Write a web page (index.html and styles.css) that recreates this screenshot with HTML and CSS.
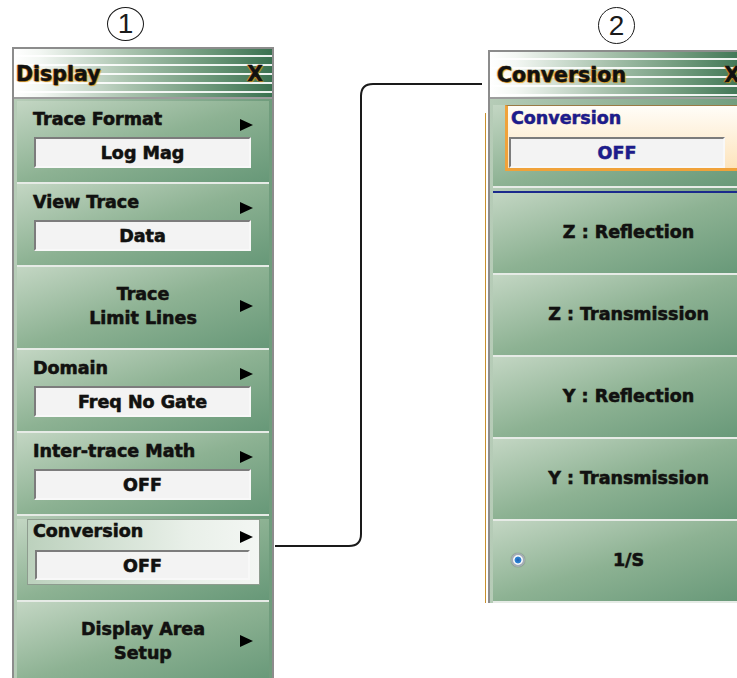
FILE: index.html
```html
<!DOCTYPE html>
<html lang="en">

<head>
    <meta charset="UTF-8">
    <meta name="viewport" content="width=device-width, initial-scale=1.0">
    <title>Display and Conversion menus</title>
    <link rel="stylesheet" href="styles.css">
</head>

<body>
    <div class="stage">
        <div class="col col-left">
            <div class="callout">1</div>
            <div class="panel panel-display">
                <div class="panel-head">
                    <span class="head-title">Display</span>
                    <span class="head-close">X</span>
                </div>
                <div class="panel-body">
                    <div class="btn">
                        <div class="btn-head"><span class="btn-label">Trace Format</span><span class="btn-arrow"></span></div>
                        <div class="btn-value">Log Mag</div>
                    </div>
                    <div class="btn">
                        <div class="btn-head"><span class="btn-label">View Trace</span><span class="btn-arrow"></span></div>
                        <div class="btn-value">Data</div>
                    </div>
                    <div class="btn btn-center">
                        <span class="btn-text">Trace<br>Limit Lines</span>
                        <span class="btn-arrow"></span>
                    </div>
                    <div class="btn">
                        <div class="btn-head"><span class="btn-label">Domain</span><span class="btn-arrow"></span></div>
                        <div class="btn-value">Freq No Gate</div>
                    </div>
                    <div class="btn">
                        <div class="btn-head"><span class="btn-label">Inter-trace Math</span><span class="btn-arrow"></span></div>
                        <div class="btn-value">OFF</div>
                    </div>
                    <div class="btn">
                        <div class="btn-hl">
                            <div class="btn-head"><span class="btn-label">Conversion</span><span class="btn-arrow"></span></div>
                            <div class="btn-value">OFF</div>
                        </div>
                    </div>
                    <div class="btn btn-center">
                        <span class="btn-text">Display Area<br>Setup</span>
                        <span class="btn-arrow"></span>
                    </div>
                </div>
            </div>
        </div>

        <div class="col col-right">
            <div class="callout">2</div>
            <div class="panel panel-conv">
                <div class="panel-head">
                    <span class="head-title">Conversion</span>
                    <span class="head-close">X</span>
                </div>
                <div class="panel-body">
                    <div class="btn">
                        <div class="btn-sel">
                            <div class="btn-head"><span class="btn-label">Conversion</span></div>
                            <div class="btn-value">OFF</div>
                        </div>
                    </div>
                    <div class="rule-blue"></div>
                    <div class="btn btn-opt"><span></span><span class="btn-text">Z : Reflection</span><span></span></div>
                    <div class="btn btn-opt"><span></span><span class="btn-text">Z : Transmission</span><span></span></div>
                    <div class="btn btn-opt"><span></span><span class="btn-text">Y : Reflection</span><span></span></div>
                    <div class="btn btn-opt"><span></span><span class="btn-text">Y : Transmission</span><span></span></div>
                    <div class="btn btn-opt"><span class="radio"></span><span class="btn-text">1/S</span><span></span></div>
                </div>
            </div>
        </div>

        <!-- callout line from the Conversion key to the submenu -->
        <svg class="connector" width="737" height="678" viewBox="0 0 737 678">
            <path d="M275 546 H349 Q361 546 361 534 V96 Q361 84 373 84 H482" fill="none" stroke="#1a1a1a" stroke-width="2"/>
        </svg>
    </div>
</body>

</html>
```

FILE: styles.css
```css
* {
    margin: 0;
    padding: 0;
    box-sizing: border-box;
}

body {
    background-color: #FFFFFF;
    color: #111;
    font-family: "DejaVu Sans", Verdana, sans-serif;
    overflow: hidden;
}

.stage {
    position: relative;
    display: flex;
    height: 678px;
}

.col {
    display: flex;
    flex-direction: column;
    flex-shrink: 0;
}

.col-left {
    margin-left: 12px;
    width: 262px;
}

.col-right {
    position: relative;
    margin-left: 214px;
    width: 263px;
}

/* edge of the window lying under the submenu */
.col-right::before {
    content: "";
    position: absolute;
    left: -3px;
    top: 113px;
    width: 1px;
    height: 490px;
    background-color: #c8902e;
}

.callout {
    width: 37px;
    height: 37px;
    margin-top: 7px;
    border: 1.5px solid #1a1a1a;
    border-radius: 50%;
    display: flex;
    align-items: center;
    justify-content: center;
    font-family: "Liberation Sans", Arial, sans-serif;
    font-size: 28px;
    color: #1a1a1a;
}

.col-left .callout {
    margin-left: 95px;
}

.col-right .callout {
    margin-left: 110px;
}

.panel {
    margin-top: 6px;
    border: 2px solid #8c8c8c;
    border-bottom: none;
    display: flex;
    flex-direction: column;
}

.panel-display {
    flex: 1;
}

.panel-head {
    height: 50px;
    display: flex;
    align-items: center;
    justify-content: space-between;
    padding: 1px 9px 0 2px;
    border-bottom: 2px solid #9c9c9c;
    background:
        repeating-linear-gradient(to bottom, transparent 0, transparent 6px, rgba(255, 255, 255, 0.9) 6px, rgba(255, 255, 255, 0.9) 8px, transparent 8px, transparent 9px),
        linear-gradient(to right, #ffffff 0%, #f3f7f3 10%, #a8c2ad 45%, #6d987a 75%, #3a7150 100%);
}

.panel-conv .panel-head {
    padding-left: 7px;
}

.head-title,
.head-close {
    font-size: 20.5px;
    font-weight: bold;
    color: #111;
    -webkit-text-stroke: 0.4px #111;
    text-shadow: 1px 1px 1px #e49a1c, -1px 0 1px #e49a1c;
}

.panel-body {
    flex: 1;
    padding-top: 2px;
    background: linear-gradient(to right, #b6ccb7, #6f9c7c);
}

.btn {
    height: 83px;
    margin: 0 3px;
    border-bottom: 2px solid #e6ebe6;
    background: linear-gradient(to bottom right, #c3d6c3, #8db293 50%, #679878);
}

.btn-head {
    display: flex;
    justify-content: space-between;
    align-items: flex-start;
    height: 31px;
    padding: 8px 16px 0 16px;
}

.btn-label,
.btn-text,
.btn-value {
    font-size: 17.5px;
    font-weight: bold;
    -webkit-text-stroke: 0.45px #111;
    text-shadow: 0 0 1px rgba(60, 40, 0, 0.5);
}

.btn-label,
.btn-text {
    line-height: 20px;
}

.btn-arrow {
    width: 0;
    height: 0;
    margin-top: 10px;
    border-left: 13px solid #000;
    border-top: 6.5px solid transparent;
    border-bottom: 6.5px solid transparent;
}

.btn-value {
    height: 31px;
    margin: 5px 18px 0 17px;
    padding-top: 1px;
    border: 2px solid;
    border-color: #7c7c7c #f8f8f8 #f8f8f8 #7c7c7c;
    background-color: #f3f3f3;
    text-align: center;
    line-height: 26px;
}

/* two line keys, text centred with arrow at the right */
.btn-center {
    display: grid;
    grid-template-columns: 1fr auto 1fr;
    align-items: center;
    padding: 0 16px 3px;
}

.btn-center .btn-text {
    grid-column: 2;
    text-align: center;
    line-height: 24px;
}

.btn-center .btn-arrow {
    grid-column: 3;
    justify-self: end;
    margin-top: 0;
}

/* highlighted key that opened the submenu */
.btn-hl {
    height: 66px;
    margin: 3px 9px 0 10px;
    border: 1px solid #8e9c8f;
    background: linear-gradient(to right, #bcd1bd, #e9f0e9 70%, #f3f6f3);
}

.btn-hl .btn-head {
    height: 23px;
    padding: 1px 6px 0 5px;
}

.btn-hl .btn-value {
    height: 30px;
    margin: 7px 9px 0 7px;
}

/* submenu */
.panel-conv {
    height: 553px;
}

.btn-sel {
    height: 66px;
    margin: 4px -3px 0 12px;
    border: 1px solid #9a7a44;
    border-left: 3px solid #f0a23a;
    border-bottom: 3px solid #f0a23a;
    background: linear-gradient(to bottom, #fffdf8, #fde4bc);
}

.btn-sel .btn-head {
    height: 26px;
    padding: 2px 0 0 3px;
}

.btn-sel .btn-label,
.btn-sel .btn-value {
    color: #1c1c8e;
    -webkit-text-stroke: 0.45px #1c1c8e;
    text-shadow: 0 0 1px rgba(200, 120, 0, 0.5);
}

.btn-sel .btn-value {
    width: 216px;
    margin: 5px 0 0 1px;
}

.rule-blue {
    height: 2px;
    margin: 3px 0 0 3px;
    background-color: #1b2a8c;
}

.panel-conv .btn-opt {
    height: 82px;
}

.btn-opt {
    display: grid;
    grid-template-columns: 1fr auto 1fr;
    align-items: center;
    padding: 0 0 3px 18px;
}

.btn-opt .btn-text {
    grid-column: 2;
}

.radio {
    width: 14px;
    height: 14px;
    border-radius: 50%;
    border: 2px solid #a4acb4;
    background: radial-gradient(circle, #1e5fb0 0, #2f86d6 3px, #f4f6f8 3.8px);
    box-shadow: 0 0 1px rgba(0, 0, 0, 0.6);
}

.connector {
    position: absolute;
    left: 0;
    top: 0;
    pointer-events: none;
}
```
